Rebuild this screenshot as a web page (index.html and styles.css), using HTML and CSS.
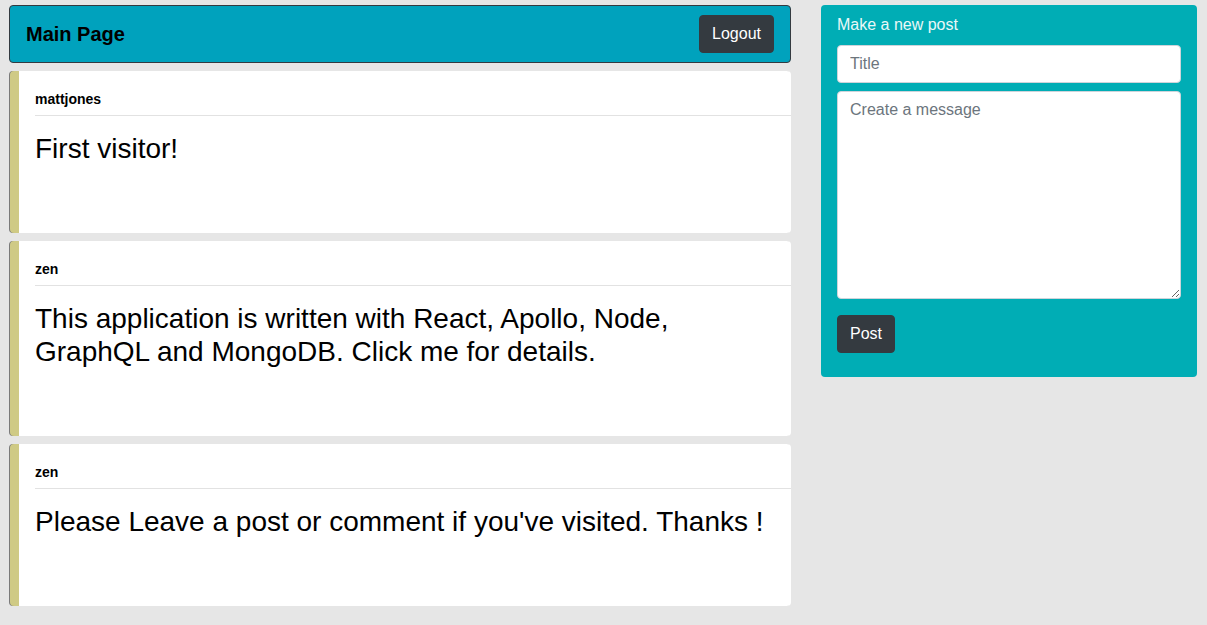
FILE: index.html
```html
<!DOCTYPE html>
<html>
<head>
<meta charset="utf-8">
<title>Main Page</title>
<link rel="stylesheet" href="styles.css">
</head>
<body>
<div class="page">
  <main class="feed">
    <header class="topbar">
      <h1 class="title">Main Page</h1>
      <button class="btn">Logout</button>
    </header>
    <article class="post">
      <div class="author">mattjones</div>
      <hr class="sep">
      <p class="body">First visitor!</p>
    </article>
    <article class="post">
      <div class="author">zen</div>
      <hr class="sep">
      <p class="body">This application is written with React, Apollo, Node, GraphQL and MongoDB. Click me for details.</p>
    </article>
    <article class="post">
      <div class="author">zen</div>
      <hr class="sep">
      <p class="body">Please Leave a post or comment if you've visited. Thanks !</p>
    </article>
  </main>
  <aside class="composer">
    <div class="composer-title">Make a new post</div>
    <input class="field" type="text" placeholder="Title">
    <textarea class="field area" placeholder="Create a message"></textarea>
    <div><button class="btn">Post</button></div>
  </aside>
</div>
</body>
</html>
```

FILE: styles.css
```css
* { box-sizing: border-box; }
html, body {
  margin: 0;
  background: #e6e6e6;
  font-family: "Liberation Sans", Arial, sans-serif;
  color: #000;
}
.page {
  display: grid;
  grid-template-columns: 782px 376px;
  column-gap: 30px;
  padding: 5px 10px 0 9px;
  align-items: start;
}
.feed {
  display: flex;
  flex-direction: column;
  gap: 8px;
}
.topbar {
  display: flex;
  align-items: center;
  justify-content: space-between;
  height: 58px;
  padding: 0 16px;
  background: #00a2bd;
  border: 1px solid #343a40;
  border-radius: 4px;
}
.title {
  margin: 0;
  font-size: 20px;
  font-weight: bold;
  color: #000;
}
.btn {
  font-family: "Liberation Sans", Arial, sans-serif;
  font-size: 16px;
  line-height: 24px;
  padding: 6px 12px;
  height: 38px;
  color: #fff;
  background: #343a40;
  border: 1px solid #343a40;
  border-radius: 4px;
}
.post {
  background: #fff;
  border-left: 9px solid #cfca85;
  box-shadow: -1px 0 0 #7a7a7a;
  margin-left: 1px;
  border-radius: 4px;
  padding: 20px 0 68px 16px;
}
.author {
  font-size: 14px;
  font-weight: bold;
  line-height: 16px;
}
.sep {
  border: 0;
  border-top: 1px solid #e2e2e2;
  margin: 8px 0 16px 0;
}
.body {
  margin: 0;
  font-size: 28px;
  line-height: 33px;
  padding-right: 16px;
}
.composer {
  background: #00adb5;
  border-radius: 4px;
  padding: 8px 16px 24px 16px;
  display: flex;
  flex-direction: column;
  gap: 8px;
}
.composer-title {
  color: #eaf8f8;
  font-size: 16px;
  line-height: 24px;
}
.field {
  display: block;
  width: 100%;
  height: 38px;
  padding: 6px 12px;
  font-family: "Liberation Sans", Arial, sans-serif;
  font-size: 16px;
  line-height: 24px;
  color: #495057;
  background: #fff;
  border: 1px solid #ced4da;
  border-radius: 4px;
}
.field::placeholder { color: #6c757d; }
.area {
  height: 208px;
  resize: vertical;
  margin-bottom: 8px;
}
```
